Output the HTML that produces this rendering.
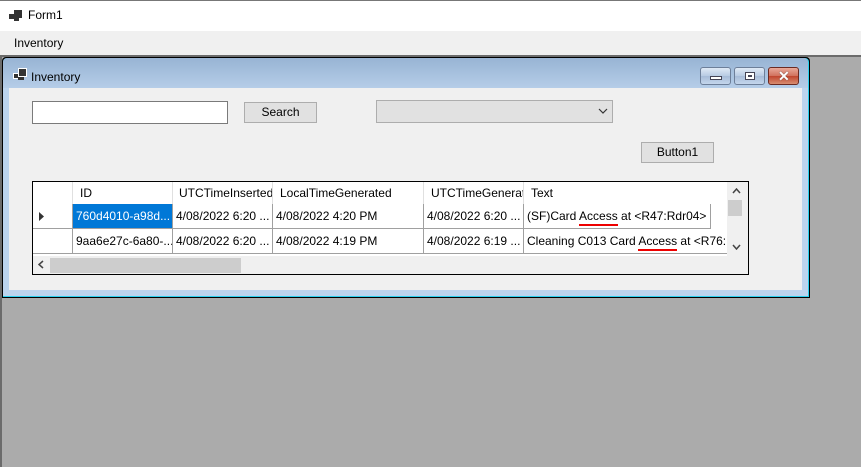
<!DOCTYPE html>
<html><head><style>
*{margin:0;padding:0;box-sizing:border-box}
body{width:861px;height:467px;overflow:hidden;background:#ababab;font-family:"Liberation Sans",sans-serif;font-size:12px;color:#000;position:relative}
.a{position:absolute}
.t{white-space:nowrap;overflow:hidden}
.cell{position:absolute;height:25px;line-height:24px;padding-left:3px;border-right:1px solid #a0a0a0;border-bottom:1px solid #a0a0a0;background:#fff;white-space:nowrap;overflow:hidden}
.hd{position:absolute;top:0;height:22px;line-height:22px;padding-left:7px;border-right:1px solid #e0e0e0;background:#fff;white-space:nowrap;overflow:hidden}
.btn{position:absolute;background:#e1e1e1;border:1px solid #adadad;text-align:center}
.wb{position:absolute;top:67px;width:31px;height:18px;border:1px solid #6d7f99;border-radius:3px;background:linear-gradient(#dfe9f5,#b8cbe3 50%,#a7bcd8 51%,#c4d6ec)}
u{text-decoration:none;border-bottom:2px solid #e00;padding-bottom:1px}
</style></head><body>
<div class="a" style="left:0;top:0;width:861px;height:31px;background:#fff;border-top:1px solid #777"></div>
<svg class="a" style="left:9px;top:10px" width="14" height="12"><rect x="0" y="4" width="5" height="5" fill="#333"/><rect x="5" y="0" width="8" height="8" fill="#333"/><rect x="5" y="8" width="5" height="3" fill="#333"/></svg>
<div class="a" style="left:28px;top:8px;font-size:12px">Form1</div>
<div class="a" style="left:0;top:31px;width:861px;height:24px;background:#f0f0f0"></div>
<div class="a" style="left:14px;top:36px">Inventory</div>
<div class="a" style="left:0;top:55px;width:861px;height:2px;background:#6b6b6b"></div>
<div class="a" style="left:0;top:57px;width:2px;height:410px;background:#6b6b6b"></div>
<!-- child window -->
<div class="a" style="left:2px;top:57px;width:808px;height:241px;background:#000;border-radius:4px 4px 0 0"></div>
<div class="a" style="left:3px;top:58px;width:806px;height:239px;background:#2ad0ee;border-radius:4px 4px 0 0"></div>
<div class="a" style="left:3px;top:58px;width:805px;height:238px;background:linear-gradient(#98b4d4,#b5cde8 30px,#bcd4ee 30px);border-radius:4px 4px 0 0"></div>
<svg class="a" style="left:13px;top:68px" width="15" height="14"><rect x="0" y="5" width="6" height="6" fill="#fff"/><rect x="1" y="6" width="4" height="4" fill="#333"/><rect x="5" y="0" width="9" height="9" fill="#fff"/><rect x="6" y="1" width="7" height="7" fill="#333"/><rect x="5" y="9" width="6" height="3" fill="#333"/></svg>
<div class="a" style="left:31px;top:70px">Inventory</div>
<div class="wb" style="left:700px"><div class="a" style="left:9px;top:8px;width:12px;height:4px;background:#fff;border:1px solid #445"></div></div>
<div class="wb" style="left:734px"><div class="a" style="left:10px;top:4px;width:10px;height:8px;background:#fff;border:1px solid #445"><div class="a" style="left:2px;top:2px;width:4px;height:2px;background:#445"></div></div></div>
<div class="wb" style="left:768px;border-color:#6b2a22;background:linear-gradient(#e9a99a,#d0705c 50%,#c0452e 51%,#d88c70)"><div class="a" style="left:9px;top:1px;color:#fff;font-weight:bold;font-size:14px;line-height:14px;text-shadow:0 0 1px #333">✕</div></div>
<div class="a" style="left:9px;top:88px;width:793px;height:202px;background:#f0f0f0"></div>
<div class="a" style="left:32px;top:101px;width:196px;height:23px;background:#fff;border:1px solid #7a7a7a"></div>
<div class="btn" style="left:244px;top:102px;width:73px;height:21px;line-height:19px">Search</div>
<div class="a" style="left:376px;top:100px;width:237px;height:23px;background:#e1e1e1;border:1px solid #adadad"></div>
<svg class="a" style="left:598px;top:108px" width="10" height="6"><path d="M1 1L5 5L9 1" stroke="#333" fill="none" stroke-width="1.2"/></svg>
<div class="btn" style="left:641px;top:142px;width:73px;height:21px;line-height:19px">Button1</div>
<!-- grid -->
<div class="a" style="left:32px;top:181px;width:717px;height:94px;background:#f0f0f0;border:1px solid #000;overflow:hidden">
 <div class="a" style="left:0;top:0;width:695px;height:74px;background:#fff"></div>
 <div class="hd" style="left:0;width:40px;border-right:1px solid #e0e0e0"></div>
 <div class="hd" style="left:40px;width:100px">ID</div>
 <div class="hd" style="left:140px;width:100px;padding-left:6px">UTCTimeInserted</div>
 <div class="hd" style="left:240px;width:151px">LocalTimeGenerated</div>
 <div class="hd" style="left:391px;width:100px">UTCTimeGenerated</div>
 <div class="hd" style="left:491px;width:204px">Text</div>
 <div class="a" style="left:0;top:22px;width:40px;height:25px;border-right:1px solid #a0a0a0;border-bottom:1px solid #a0a0a0;background:#fff"><svg class="a" style="left:6px;top:8px" width="6" height="9"><path d="M0 0L5 4.5L0 9Z" fill="#333"/></svg></div>
 <div class="a" style="left:0;top:47px;width:40px;height:25px;border-right:1px solid #a0a0a0;border-bottom:1px solid #a0a0a0;background:#fff"></div>
 <div class="cell" style="left:40px;top:22px;width:100px;background:#0078d7;color:#fff">760d4010-a98d...</div>
 <div class="cell" style="left:140px;top:22px;width:100px">4/08/2022 6:20 ...</div>
 <div class="cell" style="left:240px;top:22px;width:151px">4/08/2022 4:20 PM</div>
 <div class="cell" style="left:391px;top:22px;width:100px">4/08/2022 6:20 ...</div>
 <div class="cell" style="left:491px;top:22px;width:187px">(SF)Card <u>Access</u> at &lt;R47:Rdr04&gt; in</div>
 <div class="cell" style="left:40px;top:47px;width:100px">9aa6e27c-6a80-...</div>
 <div class="cell" style="left:140px;top:47px;width:100px">4/08/2022 6:20 ...</div>
 <div class="cell" style="left:240px;top:47px;width:151px">4/08/2022 4:19 PM</div>
 <div class="cell" style="left:391px;top:47px;width:100px">4/08/2022 6:19 ...</div>
 <div class="cell" style="left:491px;top:47px;width:204px">Cleaning C013 Card <u>Access</u> at &lt;R76:Rdr</div>
 <!-- vscroll -->
 <div class="a" style="left:694px;top:0;width:21px;height:74px;background:#f0f0f0"></div>
 <svg class="a" style="left:699px;top:6px" width="9" height="6"><path d="M1 5L4.5 1L8 5" stroke="#444" fill="none" stroke-width="1.5"/></svg>
 <div class="a" style="left:695px;top:18px;width:14px;height:16px;background:#cdcdcd"></div>
 <svg class="a" style="left:699px;top:62px" width="9" height="6"><path d="M1 1L4.5 5L8 1" stroke="#444" fill="none" stroke-width="1.5"/></svg>
 <!-- hscroll -->
 <div class="a" style="left:0;top:74px;width:695px;height:17px;background:#f0f0f0"></div>
 <svg class="a" style="left:5px;top:78px" width="6" height="9"><path d="M5 1L1 4.5L5 8" stroke="#444" fill="none" stroke-width="1.5"/></svg>
 <div class="a" style="left:17px;top:76px;width:191px;height:15px;background:#cdcdcd"></div>
</div>
</body></html>
